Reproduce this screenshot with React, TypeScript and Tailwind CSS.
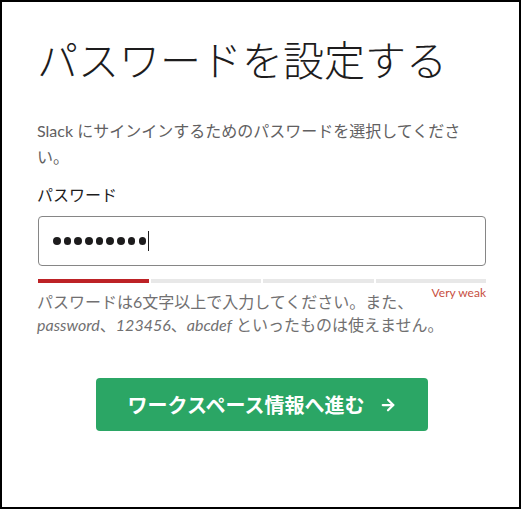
import { ArrowRight } from "lucide-react";

const font = { fontFamily: "Lato, 'Noto Sans CJK JP', sans-serif" };

export default function App() {
  const segments = ["bg-[#bd2226]", "bg-[#e8e8e8]", "bg-[#e8e8e8]", "bg-[#e8e8e8]"];

  return (
    <div className="w-[521px] h-[509px] border-2 border-black bg-white" style={font}>
      <div className="pl-[36px] pr-[33px] pt-[35px]">
        <h1 className="-ml-px text-[41px] leading-[48px] font-light text-[#1d1c1d] whitespace-nowrap">
          パスワードを設定する
        </h1>

        <p className="-ml-px mt-[33px] text-[16px] leading-[26px] text-[#616061]">
          Slack にサインインするためのパスワードを選択してください。
        </p>

        <div className="-ml-px mt-[13px] text-[16px] leading-[24px] text-[#1d1c1d]">パスワード</div>

        <div className="mt-[9px] h-[50px] w-[448px] rounded-[4px] border border-[#868686] flex items-center pl-[14px]">
          <div className="flex items-center gap-[3.2px]">
            {Array.from({ length: 9 }).map((_, i) => (
              <span key={i} className="w-[7.5px] h-[7.5px] rounded-full bg-[#1d1c1d]" />
            ))}
          </div>
          <span className="ml-[2px] w-px h-[20px] bg-[#1d1c1d]" />
        </div>

        {/* strength meter */}
        <div className="mt-[13px] w-[448px] flex gap-[2px]">
          {segments.map((c, i) => (
            <div key={i} className={`flex-1 h-[4px] ${c}`} />
          ))}
        </div>

        <p className="-ml-px mt-[7px] w-[449px] text-[16px] leading-[23px] text-[#717071]">
          <span className="float-right -mt-[4px] text-[12px] leading-[14px] text-[#c8503f]">Very weak</span>
          パスワードは6文字以上で入力してください。また、
          <br />
          <i>password</i>、<i>123456</i>、<i>abcdef</i> といったものは使えません。
        </p>

        <div className="mt-[42px] w-[448px] flex justify-center">
          <button className="w-[332px] h-[53px] rounded-[4px] bg-[#2ba665] text-white text-[20px] font-bold flex items-center justify-center gap-[14px]">
            <span>ワークスペース情報へ進む</span>
            <ArrowRight size={18} strokeWidth={3} />
          </button>
        </div>
      </div>
    </div>
  );
}
